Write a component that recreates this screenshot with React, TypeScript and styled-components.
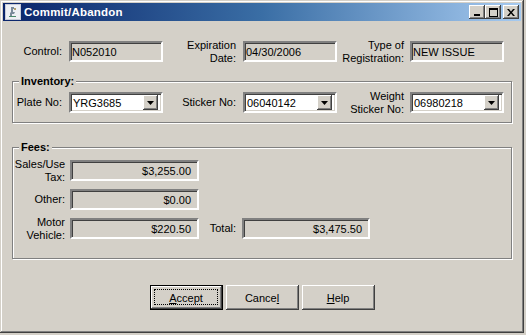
import React from 'react';
import styled, { createGlobalStyle } from 'styled-components';

const Global = createGlobalStyle`
	html, body {
		margin: 0;
		padding: 0;
		background: #d4d0c8;
	}
	body {
		font-family: 'Liberation Sans', Arial, sans-serif;
		font-size: 11px;
		color: #000;
	}
`;

const FACE = '#d4d0c8';
const SHADOW = '#808080';
const DARK = '#404040';

const Window = styled.div`
	width: 524px;
	height: 333px;
	box-sizing: border-box;
	padding: 3px;
	background: ${FACE};
	display: flex;
	flex-direction: column;
	box-shadow: inset -1px -1px ${DARK}, inset 1px 1px ${FACE}, inset -2px -2px ${SHADOW}, inset 2px 2px #fff;
`;

const TitleBar = styled.div`
	height: 18px;
	display: flex;
	align-items: center;
	padding: 0 2px 0 2px;
	background: linear-gradient(to right, #0a246a 0%, #3a6ea5 50%, #a6caf0 100%);
	color: #fff;
	font-weight: bold;
	font-size: 11.5px;
	gap: 3px;
`;

const Title = styled.span`
	flex: 1;
	letter-spacing: 0.2px;
`;

const CaptionButton = styled.div<{ $gapLeft?: boolean }>`
	width: 16px;
	height: 14px;
	box-sizing: border-box;
	background: ${FACE};
	margin-left: ${(p) => (p.$gapLeft ? '2px' : '0')};
	display: flex;
	align-items: center;
	justify-content: center;
	box-shadow: inset -1px -1px ${DARK}, inset 1px 1px #fff, inset -2px -2px ${SHADOW};
`;

const Captions = styled.div`
	display: flex;
	align-items: center;
	margin-right: 0;
`;

const Body = styled.div`
	padding: 0 9px;
	display: flex;
	flex-direction: column;
`;

const FieldGrid = styled.div<{ $cols: string; $top?: number }>`
	display: grid;
	grid-template-columns: ${(p) => p.$cols};
	align-items: center;
	margin-top: ${(p) => p.$top ?? 0}px;
	min-height: 27px;
`;

const Label = styled.div`
	text-align: right;
	padding-right: 7px;
	line-height: 13px;
	white-space: nowrap;
`;

const Sunken = styled.div<{ $white?: boolean; $right?: boolean }>`
	height: 21px;
	box-sizing: border-box;
	border: 2px solid;
	border-color: ${SHADOW} #fff #fff ${SHADOW};
	box-shadow: inset 1px 1px ${DARK}, inset -1px -1px ${FACE};
	background: ${(p) => (p.$white ? '#fff' : FACE)};
	display: flex;
	align-items: center;
	justify-content: ${(p) => (p.$right ? 'flex-end' : 'flex-start')};
	padding: 0 ${(p) => (p.$right ? '6px' : '1px')} 0 1px;
	white-space: nowrap;
`;

const ComboText = styled.span`
	flex: 1;
	padding-left: 1px;
`;

const DropButton = styled.div`
	width: 15px;
	height: 15px;
	box-sizing: border-box;
	margin-right: 2px;
	background: ${FACE};
	display: flex;
	align-items: center;
	justify-content: center;
	box-shadow: inset -1px -1px ${DARK}, inset 1px 1px #fff, inset -2px -2px ${SHADOW};
`;

const Group = styled.div<{ $top: number }>`
	position: relative;
	margin-top: ${(p) => p.$top}px;
	border: 1px solid ${SHADOW};
	box-shadow: inset 1px 1px #fff, 1px 1px #fff;
`;

const Legend = styled.span`
	position: absolute;
	top: -7px;
	left: 6px;
	padding: 0 2px;
	background: ${FACE};
	font-weight: bold;
	line-height: 13px;
`;

const InventoryInner = styled.div`
	padding: 7px 0 6px;
`;

const FeesGrid = styled.div`
	display: grid;
	grid-template-columns: 57px 129px 43px 128px;
	grid-template-rows: 21px 21px 21px;
	row-gap: 8px;
	align-items: center;
	padding: 12px 0 19px;
`;

const FeeLabel = styled(Label)<{ $pad?: number }>`
	padding-right: ${(p) => p.$pad ?? 5}px;
`;

const ButtonRow = styled.div`
	display: flex;
	justify-content: center;
	gap: 3px;
	margin-top: 26px;
`;

const Btn = styled.div<{ $default?: boolean }>`
	width: 73px;
	height: 25px;
	box-sizing: border-box;
	background: ${FACE};
	display: flex;
	align-items: center;
	justify-content: center;
	position: relative;
	border: 1px solid ${(p) => (p.$default ? '#000' : 'transparent')};
	box-shadow: ${(p) =>
		p.$default
			? `inset -1px -1px ${DARK}, inset 1px 1px #fff, inset -2px -2px ${SHADOW}`
			: `inset -1px -1px ${DARK}, inset 1px 1px #fff, inset -2px -2px ${SHADOW}, inset 2px 2px ${FACE}`};
	${(p) => (!p.$default ? `border: none; box-shadow: inset -1px -1px ${DARK}, inset 1px 1px #fff, inset -2px -2px ${SHADOW};` : '')}
`;

const Focus = styled.div`
	position: absolute;
	inset: 3px 4px 4px 3px;
	border: 1px dotted #000;
`;

const Mn = styled.span`
	text-decoration: underline;
`;

const ArrowDown = () => (
	<svg width="7" height="4" viewBox="0 0 7 4">
		<path d="M0 0h7L3.5 4z" fill="#000" />
	</svg>
);

const Combo = ({ value }: { value: string }) => (
	<Sunken $white>
		<ComboText>{value}</ComboText>
		<DropButton>
			<ArrowDown />
		</DropButton>
	</Sunken>
);

const AppIcon = () => (
	<svg width="16" height="16" viewBox="0 0 16 16">
		<rect x="0.5" y="0.5" width="15" height="15" fill="#eef0f4" stroke="#c8ccd8" />
		<path d="M6 3h3v2H8v3h2l-1 2H7v3H5V9l1-1V5z" fill="#7a8a9a" />
		<rect x="4" y="12" width="7" height="1" fill="#4a8a6a" />
		<rect x="9" y="4" width="2" height="2" fill="#b0a070" />
	</svg>
);

const App = () => {
	const topCols = '57px 94px 80px 94px 73px 94px';
	const invCols = '56px 94px 80px 94px 73px 94px';

	return (
		<>
			<Global />
			<Window>
				<TitleBar>
					<AppIcon />
					<Title>Commit/Abandon</Title>
					<Captions>
						<CaptionButton>
							<svg width="8" height="7" viewBox="0 0 8 7">
								<rect x="1" y="5" width="6" height="2" fill="#000" />
							</svg>
						</CaptionButton>
						<CaptionButton>
							<svg width="9" height="9" viewBox="0 0 9 9">
								<path d="M0 0h9v9H0z M1 2v6h7V2z" fill="#000" fillRule="evenodd" />
							</svg>
						</CaptionButton>
						<CaptionButton $gapLeft>
							<svg width="8" height="7" viewBox="0 0 8 7">
								<path d="M0 0h2l2 2.5L6 0h2L5 3.5 8 7H6L4 4.5 2 7H0l3-3.5z" fill="#000" />
							</svg>
						</CaptionButton>
					</Captions>
				</TitleBar>

				<Body>
					<FieldGrid $cols={topCols} $top={17}>
						<Label>Control:</Label>
						<Sunken>N052010</Sunken>
						<Label>
							Expiration
							<br />
							Date:
						</Label>
						<Sunken>04/30/2006</Sunken>
						<Label style={{ paddingRight: 6 }}>
							Type of
							<br />
							Registration:
						</Label>
						<Sunken>NEW ISSUE</Sunken>
					</FieldGrid>

					<Group $top={16}>
						<Legend>Inventory:</Legend>
						<InventoryInner>
							<FieldGrid $cols={invCols}>
								<Label>Plate No:</Label>
								<Combo value="YRG3685" />
								<Label>Sticker No:</Label>
								<Combo value="06040142" />
								<Label style={{ paddingRight: 6 }}>
									Weight
									<br />
									Sticker No:
								</Label>
								<Combo value="06980218" />
							</FieldGrid>
						</InventoryInner>
					</Group>

					<Group $top={24}>
						<Legend>Fees:</Legend>
						<FeesGrid>
							<FeeLabel>
								Sales/Use
								<br />
								Tax:
							</FeeLabel>
							<Sunken $right>$3,255.00</Sunken>
							<div />
							<div />

							<FeeLabel>Other:</FeeLabel>
							<Sunken $right>$0.00</Sunken>
							<div />
							<div />

							<FeeLabel>
								Motor
								<br />
								Vehicle:
							</FeeLabel>
							<Sunken $right>$220.50</Sunken>
							<FeeLabel $pad={6}>Total:</FeeLabel>
							<Sunken $right>$3,475.50</Sunken>
						</FeesGrid>
					</Group>

					<ButtonRow>
						<Btn $default>
							<Focus />
							<span>
								<Mn>A</Mn>ccept
							</span>
						</Btn>
						<Btn>
							<span>
								Cance<Mn>l</Mn>
							</span>
						</Btn>
						<Btn>
							<span>
								<Mn>H</Mn>elp
							</span>
						</Btn>
					</ButtonRow>
				</Body>
			</Window>
		</>
	);
};

export default App;
